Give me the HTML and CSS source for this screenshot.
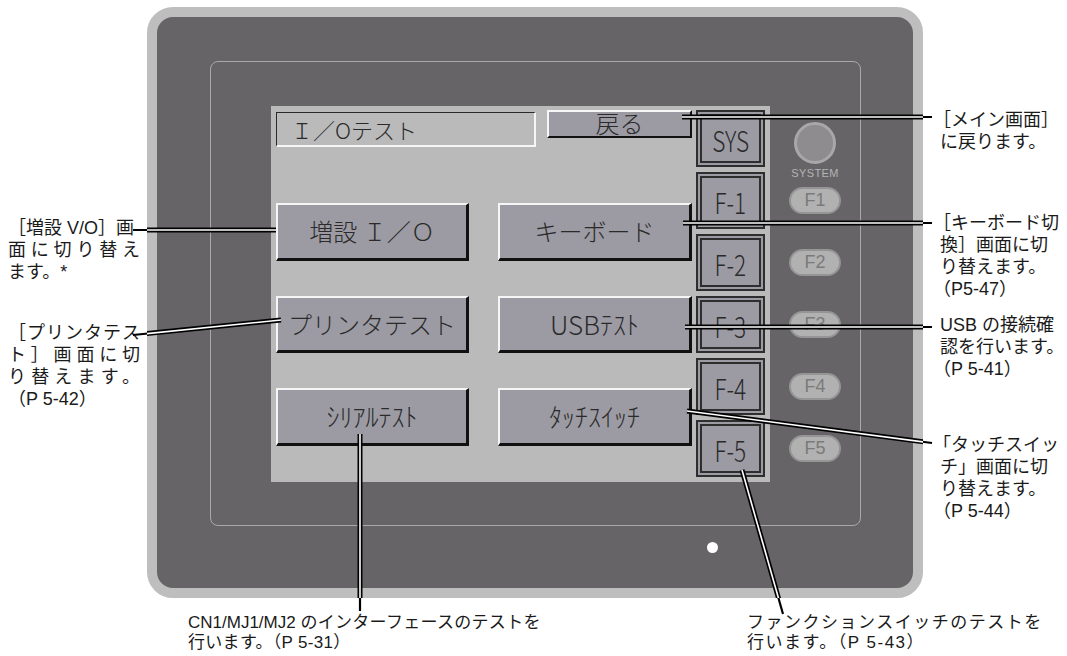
FILE: index.html
```html
<!DOCTYPE html>
<html lang="ja">
<head>
    <meta charset="UTF-8">
    <meta name="viewport" content="width=device-width, initial-scale=1.0">
    <title>I/Oテスト</title>
    <link rel="stylesheet" href="styles.css">
</head>
<body>
    <div class="page">
        <div class="notes-left">
            <p class="note note-a">
                <span class="ln">［増設 V/O］画</span>
                <span class="ln j">面に切り替え</span>
                <span class="ln">ます。*</span>
            </p>
            <p class="note note-b">
                <span class="ln j">［プリンタテス</span>
                <span class="ln j">ト］画面に切</span>
                <span class="ln j">り替えます。</span>
                <span class="ln">（P 5-42）</span>
            </p>
        </div>

        <div class="device">
            <div class="bezel">
                <div class="screen">
                    <div class="screen-main">
                        <div class="screen-top">
                            <div class="title-box">Ｉ／Oテスト</div>
                            <div class="btn btn-back">戻る</div>
                        </div>
                        <div class="btn-grid">
                            <div class="btn">増設 Ｉ／Ｏ</div>
                            <div class="btn">キーボード</div>
                            <div class="btn">プリンタテスト</div>
                            <div class="btn btn-half">USBﾃｽﾄ</div>
                            <div class="btn btn-half">ｼﾘｱﾙﾃｽﾄ</div>
                            <div class="btn btn-half">ﾀｯﾁｽｲｯﾁ</div>
                        </div>
                    </div>
                    <div class="fkeys">
                        <div class="fkey"><span>SYS</span></div>
                        <div class="fkey"><span>F-1</span></div>
                        <div class="fkey"><span>F-2</span></div>
                        <div class="fkey"><span>F-3</span></div>
                        <div class="fkey"><span>F-4</span></div>
                        <div class="fkey"><span>F-5</span></div>
                    </div>
                </div>
                <div class="side">
                    <div class="knob"></div>
                    <div class="knob-label">SYSTEM</div>
                    <div class="pill">F1</div>
                    <div class="pill">F2</div>
                    <div class="pill">F3</div>
                    <div class="pill">F4</div>
                    <div class="pill">F5</div>
                </div>
            </div>
            <div class="led"></div>
        </div>

        <div class="notes-right">
            <p class="note note-c">
                <span class="ln br">［メイン画面］</span>
                <span class="ln">に戻ります。</span>
            </p>
            <p class="note note-d">
                <span class="ln br">［キーボード切</span>
                <span class="ln">換］画面に切</span>
                <span class="ln">り替えます。</span>
                <span class="ln br">（P5-47）</span>
            </p>
            <p class="note note-e">
                <span class="ln">USB の接続確</span>
                <span class="ln">認を行います。</span>
                <span class="ln br">（P 5-41）</span>
            </p>
            <p class="note note-f">
                <span class="ln br">「タッチスイッ</span>
                <span class="ln">チ」画面に切</span>
                <span class="ln">り替えます。</span>
                <span class="ln br">（P 5-44）</span>
            </p>
        </div>

        <div class="notes-bottom">
            <p class="note note-g">
                <span class="ln"><span class="lat">CN1/MJ1/MJ2 </span>のインターフェースのテストを</span>
                <span class="ln">行います。（P 5-31）</span>
            </p>
            <p class="note note-h">
                <span class="ln">ファンクションスイッチのテストを</span>
                <span class="ln">行います。（P 5-43）</span>
            </p>
        </div>
    </div>

    <svg class="callouts" width="1067" height="656" viewBox="0 0 1067 656">
        <defs>
            <clipPath id="device-clip">
                <rect x="147" y="7" width="776" height="591" rx="26"/>
            </clipPath>
            <path id="l1" d="M682 117 H932"/>
            <path id="l2" d="M683 223 H932"/>
            <path id="l3" d="M685 327 H932"/>
            <path id="l4" d="M687 411 L932 443"/>
            <path id="l5" d="M742 470 L783 614"/>
            <path id="l6" d="M360 434 V611"/>
            <path id="l7" d="M133 230 H276"/>
            <path id="l8" d="M133 335 L281 320"/>
        </defs>
        <g fill="none" stroke="#000" stroke-width="2.2">
            <use href="#l1"/><use href="#l2"/><use href="#l3"/><use href="#l4"/>
            <use href="#l5"/><use href="#l6"/><use href="#l7"/><use href="#l8"/>
        </g>
        <g clip-path="url(#device-clip)" fill="none">
            <g stroke="#000" stroke-width="5">
                <use href="#l1"/><use href="#l2"/><use href="#l3"/><use href="#l4"/>
                <use href="#l5"/><use href="#l6"/><use href="#l7"/><use href="#l8"/>
            </g>
            <g stroke="#fff" stroke-width="1.6">
                <use href="#l1"/><use href="#l2"/><use href="#l3"/><use href="#l4"/>
                <use href="#l5"/><use href="#l6"/><use href="#l7"/><use href="#l8"/>
            </g>
        </g>
    </svg>
</body>
</html>
```

FILE: styles.css
```css
body {
    margin: 0;
    width: 1067px;
    height: 656px;
    overflow: hidden;
    background-color: #ffffff;
    font-family: "Liberation Sans", "Noto Sans CJK JP", sans-serif;
    color: #1a1a1a;
    position: relative;
}

.page {
    display: grid;
    grid-template-columns: 147px 776px 144px;
    grid-template-rows: 598px 58px;
}

/* callout texts */

.note {
    margin: 0;
    font-size: 18px;
    line-height: 22px;
    white-space: nowrap;
}

.note > .ln {
    display: block;
}

.note > .ln.j {
    text-align: justify;
    text-align-last: justify;
}

.note > .ln.br {
    margin-left: -7px;
}

.notes-left {
    padding: 217px 0 0 8px;
}

.notes-left .note {
    width: 132px;
}

.note-b {
    margin-top: 39px;
}

.notes-right {
    padding: 109px 0 0 17px;
}

.note-d {
    margin-top: 59px;
}

.note-e {
    margin-top: 14px;
}

.note-f {
    margin-top: 54px;
}

.notes-bottom {
    grid-column: 1 / -1;
    display: grid;
    grid-template-columns: 559px 1fr;
    padding: 15px 0 0 188px;
}

.notes-bottom .note {
    font-size: 17px;
    line-height: 20px;
}

.note-g {
    letter-spacing: .3px;
}

.note-g .lat {
    letter-spacing: 0;
}

.note-h {
    letter-spacing: 1.5px;
}

/* device */

.device {
    margin-top: 7px;
    height: 591px;
    box-sizing: border-box;
    border: 10px solid #bebebe;
    border-radius: 26px;
    background-color: #666467;
    padding: 44px 0 0 53px;
}

.bezel {
    display: flex;
    align-items: flex-start;
    width: 651px;
    height: 465px;
    box-sizing: border-box;
    border: 1px solid #a9a9a9;
    border-radius: 8px;
}

.screen {
    display: flex;
    align-items: flex-start;
    margin: 44px 0 0 60px;
    width: 499px;
    height: 376px;
    box-sizing: border-box;
    padding: 4px 0 0 5px;
    background-color: #bababa;
    font-family: "Noto Sans CJK JP", sans-serif;
    font-weight: 300;
    color: #2a2a2a;
}

.screen-main {
    width: 416px;
}

.screen-top {
    display: flex;
    align-items: flex-start;
}

.title-box {
    margin-top: 2px;
    width: 260px;
    height: 35px;
    box-sizing: border-box;
    border-style: solid;
    border-width: 1px 2px 2px 1px;
    border-color: #2a2a2a #f6f6f6 #f6f6f6 #2a2a2a;
    padding-left: 14px;
    font-size: 22px;
    line-height: 32px;
}

.btn {
    display: flex;
    justify-content: center;
    align-items: center;
    box-sizing: border-box;
    border-style: solid;
    border-width: 2px 3px 3px 2px;
    border-color: #f6f6f6 #111111 #111111 #f6f6f6;
    background-color: #9c9ba3;
    font-size: 24px;
    line-height: 24px;
}

.btn-back {
    margin-left: 11px;
    width: 145px;
    height: 28px;
    border-width: 2px;
    padding-bottom: 2px;
}

.btn-half {
    font-size: 26px;
}

.btn-grid {
    display: grid;
    grid-template-columns: 193px 194px;
    grid-auto-rows: 57.5px;
    column-gap: 29px;
    row-gap: 35px;
    margin-top: 56px;
}

.fkeys {
    display: flex;
    flex-direction: column;
    gap: 5px;
    margin-left: 4px;
    width: 69px;
}

.fkey {
    display: flex;
    justify-content: center;
    align-items: center;
    height: 57px;
    box-sizing: border-box;
    border: 6px double #2e2e2e;
    background-color: #9c9ba3;
    font-size: 29px;
    color: #2a2a2a;
}

.fkey > span {
    display: inline-block;
    transform: scaleX(.78);
}

.side {
    display: flex;
    flex-direction: column;
    align-items: center;
    margin: 60px 0 0 17px;
    width: 56px;
}

.knob {
    width: 42px;
    height: 42px;
    box-sizing: border-box;
    border: 3px solid #a8a8a8;
    border-radius: 50%;
    background-color: #8e8c8f;
}

.knob-label {
    margin-top: 3px;
    font-size: 11px;
    line-height: 12px;
    letter-spacing: .4px;
    color: #b4b4b4;
}

.pill {
    display: flex;
    justify-content: center;
    align-items: center;
    margin-top: 35px;
    width: 52px;
    height: 27px;
    box-sizing: border-box;
    border: 2px solid #959595;
    border-radius: 14px;
    background-color: #b1b1b1;
    font-size: 18px;
    color: #7a7a7a;
}

.knob-label + .pill {
    margin-top: 8px;
}

.led {
    margin: 16px 0 0 497px;
    width: 11px;
    height: 11px;
    border-radius: 50%;
    background-color: #ffffff;
}

.callouts {
    position: absolute;
    top: 0;
    left: 0;
    pointer-events: none;
}
```
